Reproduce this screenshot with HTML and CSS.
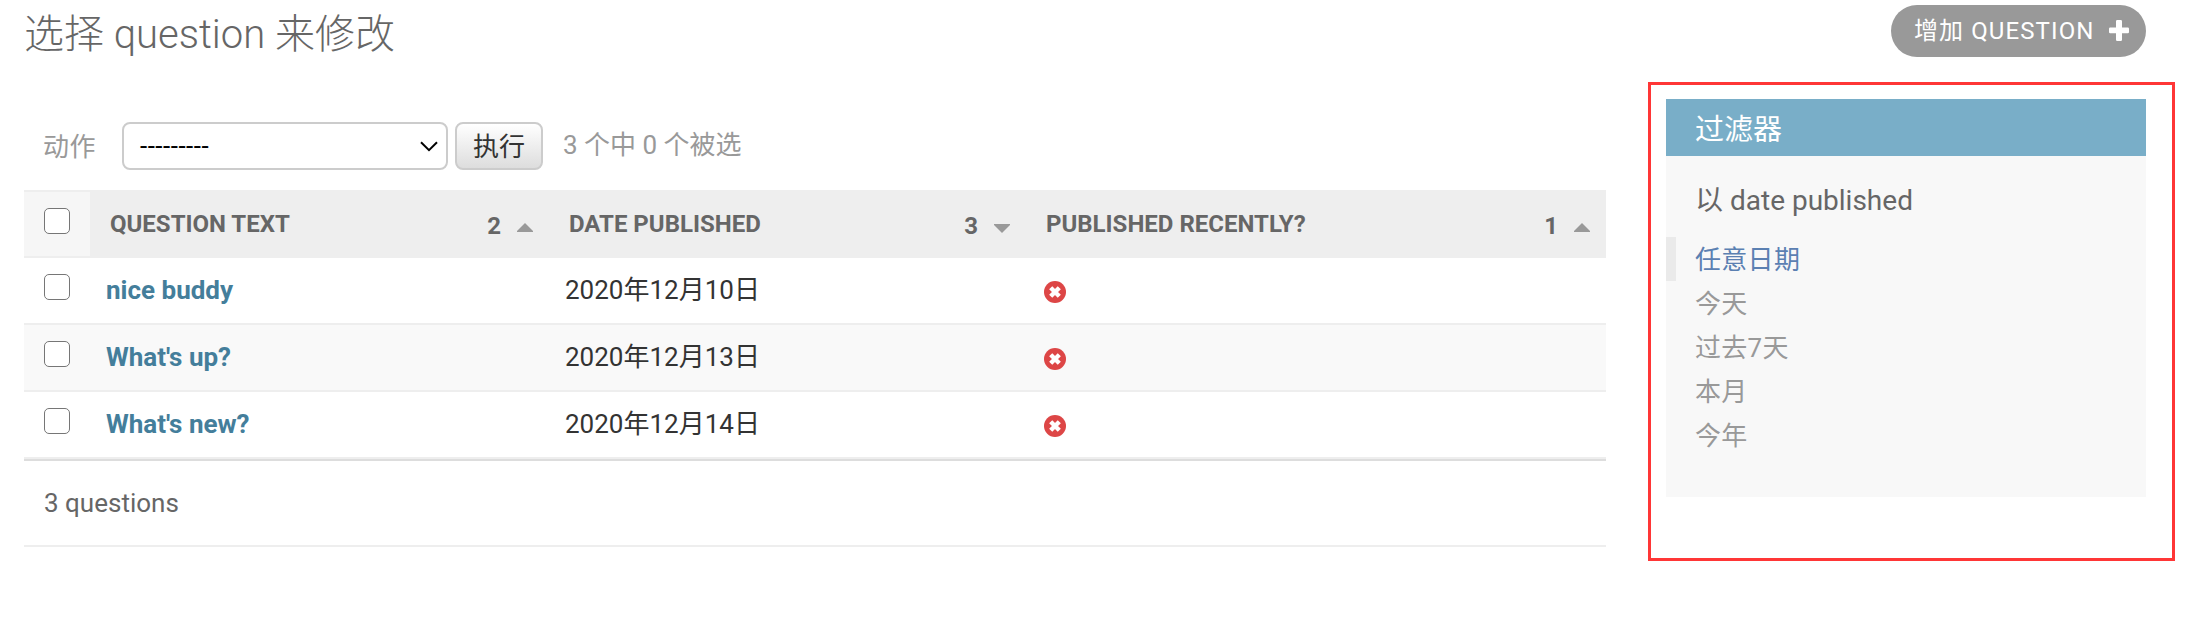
FILE: index.html
```html
<!DOCTYPE html>
<html lang="zh-CN">
<head>
<meta charset="utf-8">
<title>选择 question 来修改</title>
<link rel="stylesheet" href="styles.css">
</head>
<body>
<main class="content">
  <header class="page-head">
    <h1 class="title">选择 question 来修改</h1>
    <a class="add-link"><span>增加 QUESTION</span><svg class="plus" viewBox="0 0 20 21"><path d="M8.200 0h3.600q1.200 0 1.200 1.200V7.500h5.800q1.200 0 1.200 1.200v3.400q0 1.200-1.200 1.200H13v6.500q0 1.200-1.200 1.200H8.200Q7 21 7 19.800v-6.500H1.200Q0 13.300 0 12.100V8.700q0-1.200 1.200-1.200H7V1.200Q7 0 8.200 0z" fill="#fff"/></svg></a>
  </header>
  <div class="columns">
    <section class="list">
      <div class="actions">
        <span class="label">动作</span>
        <div class="select"><span>---------</span><svg class="chevron" viewBox="0 0 18 11"><path d="M1 1.200l8 8 8-8" fill="none" stroke="#000" stroke-width="2"/></svg></div>
        <button class="run">执行</button>
        <span class="counter">3 个中 0 个被选</span>
      </div>
      <table class="results">
        <colgroup><col class="c-check"><col class="c-text"><col class="c-date"><col class="c-recent"></colgroup>
        <thead>
          <tr>
            <th class="check-head"><div><input type="checkbox"></div></th>
            <th><div class="th"><span class="name">QUESTION TEXT</span><span class="order">2</span><svg class="arrow" viewBox="0 0 16 9"><path d="M0 9V8L8 0l8 8v1z"/></svg></div></th>
            <th><div class="th"><span class="name">DATE PUBLISHED</span><span class="order">3</span><svg class="arrow down" viewBox="0 0 16 9"><path d="M0 0v1l8 8 8-8V0z"/></svg></div></th>
            <th><div class="th"><span class="name">PUBLISHED RECENTLY?</span><span class="order">1</span><svg class="arrow" viewBox="0 0 16 9"><path d="M0 9V8L8 0l8 8v1z"/></svg></div></th>
          </tr>
        </thead>
        <tbody>
          <tr>
            <td class="check"><input type="checkbox"></td>
            <td class="link">nice buddy</td>
            <td>2020年12月10日</td>
            <td class="flag"><svg class="no" viewBox="0 0 22 22"><circle cx="11" cy="11" r="11"/><path d="M6.700 6.700l8.600 8.600M15.300 6.700l-8.600 8.600"/></svg></td>
          </tr>
          <tr class="alt">
            <td class="check"><input type="checkbox"></td>
            <td class="link">What's up?</td>
            <td>2020年12月13日</td>
            <td class="flag"><svg class="no" viewBox="0 0 22 22"><circle cx="11" cy="11" r="11"/><path d="M6.700 6.700l8.600 8.600M15.300 6.700l-8.600 8.600"/></svg></td>
          </tr>
          <tr>
            <td class="check"><input type="checkbox"></td>
            <td class="link">What's new?</td>
            <td>2020年12月14日</td>
            <td class="flag"><svg class="no" viewBox="0 0 22 22"><circle cx="11" cy="11" r="11"/><path d="M6.700 6.700l8.600 8.600M15.300 6.700l-8.600 8.600"/></svg></td>
          </tr>
        </tbody>
      </table>
      <p class="paginator">3 questions</p>
    </section>
    <aside class="outline">
      <div class="filter">
        <h2>过滤器</h2>
        <h3>以 date published</h3>
        <ul>
          <li class="selected">任意日期</li>
          <li>今天</li>
          <li>过去7天</li>
          <li>本月</li>
          <li>今年</li>
        </ul>
      </div>
    </aside>
  </div>
</main>
</body>
</html>
```
FILE: styles.css
```css
* { box-sizing: border-box; }
body {
  margin: 0;
  background: #fff;
  color: #333;
  font-family: Roboto, "Noto Sans CJK SC", sans-serif;
  font-size: 26px;
}
h1, h2, h3, ul, p { margin: 0; padding: 0; }
svg { display: block; flex: none; }
.content { padding-left: 24px; }

.page-head {
  display: flex;
  justify-content: space-between;
  align-items: flex-start;
  height: 82px;
  padding-right: 43px;
}
.title {
  padding-top: 11px;
  font-size: 40px;
  line-height: 48px;
  font-weight: 300;
  color: #666;
}
.add-link {
  display: flex;
  justify-content: space-between;
  width: 255px;
  height: 52px;
  margin-top: 5px;
  padding: 0 17px 0 23px;
  border-radius: 26px;
  background: #999;
  color: #fff;
  font-size: 24px;
  line-height: 52px;
  letter-spacing: 1.100px;
  white-space: nowrap;
}
.plus { width: 20px; height: 21px; margin-top: 15px; }

.columns { display: flex; align-items: flex-start; gap: 42px; }
.list { width: 1582px; flex: none; }

.actions { display: flex; height: 108px; padding: 40px 0 0 19px; color: #999; line-height: 48px; }
.label { width: 79px; line-height: 50px; letter-spacing: 0.400px; }
.select {
  display: flex;
  justify-content: space-between;
  width: 326px;
  height: 48px;
  padding: 0 8px 0 16px;
  border: 2px solid #ccc;
  border-radius: 8px;
  color: #000;
  line-height: 44px;
  letter-spacing: 0.500px;
}
.chevron { width: 18px; height: 11px; margin-top: 17px; }
.run {
  width: 88px;
  height: 48px;
  margin-left: 7px;
  padding: 0;
  border: 2px solid #ccc;
  border-radius: 8px;
  background: linear-gradient(#fff, #ddd);
  color: #333;
  font: inherit;
  line-height: 46px;
}
.counter { margin-left: 20px; line-height: 46px; }

.results { width: 100%; table-layout: fixed; border-collapse: separate; border-spacing: 0; }
.c-check { width: 66px; }
.c-text { width: 459px; }
.c-date { width: 477px; }
th, td { padding: 0; text-align: left; font-weight: 400; vertical-align: top; }
th { height: 68px; background: #eee; }
.check-head { padding: 2px 0; }
.check-head div { height: 64px; padding: 16px 0 0 20px; background: #f6f6f6; }
input {
  display: block;
  width: 26px;
  height: 26px;
  margin: 0;
  appearance: none;
  border: 1px solid #767676;
  border-radius: 5px;
  background: #fff;
}
.th {
  display: flex;
  padding: 0 16px 0 20px;
  color: #666;
  font-size: 24px;
  font-weight: 700;
  line-height: 68px;
}
.order { margin-left: auto; padding-top: 2px; line-height: 68px; height: 68px; }
.arrow { width: 16px; height: 9px; margin: 33px 0 0 16px; fill: #999; }
.arrow.down { margin-top: 34px; }
td { height: 67px; padding-left: 16px; border-bottom: 2px solid #eee; line-height: 64px; }
.alt td { background: #f9f9f9; }
td.check { padding: 16px 0 0 20px; }
td.link { color: #447e9b; font-weight: 700; }
td.flag { padding: 23px 0 0 18px; }
.no { width: 22px; height: 22px; fill: #dd4646; }
.no path { stroke: #fff; stroke-width: 4.400; }
.paginator {
  height: 88px;
  padding-left: 20px;
  border-top: 2px solid #ddd;
  border-bottom: 2px solid #eee;
  color: #666;
  line-height: 84px;
}

.outline { width: 527px; height: 479px; flex: none; padding: 14px 26px 0 15px; border: 3px solid #ff3636; }
.filter { height: 398px; background: #f8f8f8; }
.filter h2 {
  height: 57px;
  padding-left: 29px;
  background: #79aec8;
  color: #fff;
  font-size: 29px;
  font-weight: 400;
  line-height: 63px;
}
.filter h3 {
  height: 81px;
  padding: 25px 0 0 29px;
  color: #666;
  font-size: 28px;
  font-weight: 400;
  line-height: 40px;
}
.filter ul { list-style: none; }
.filter li { height: 44px; padding-left: 29px; color: #999; line-height: 46px; letter-spacing: 0.300px; }
.filter .selected { padding-left: 19px; border-left: 10px solid #eaeaea; color: #5b80b2; }
```
